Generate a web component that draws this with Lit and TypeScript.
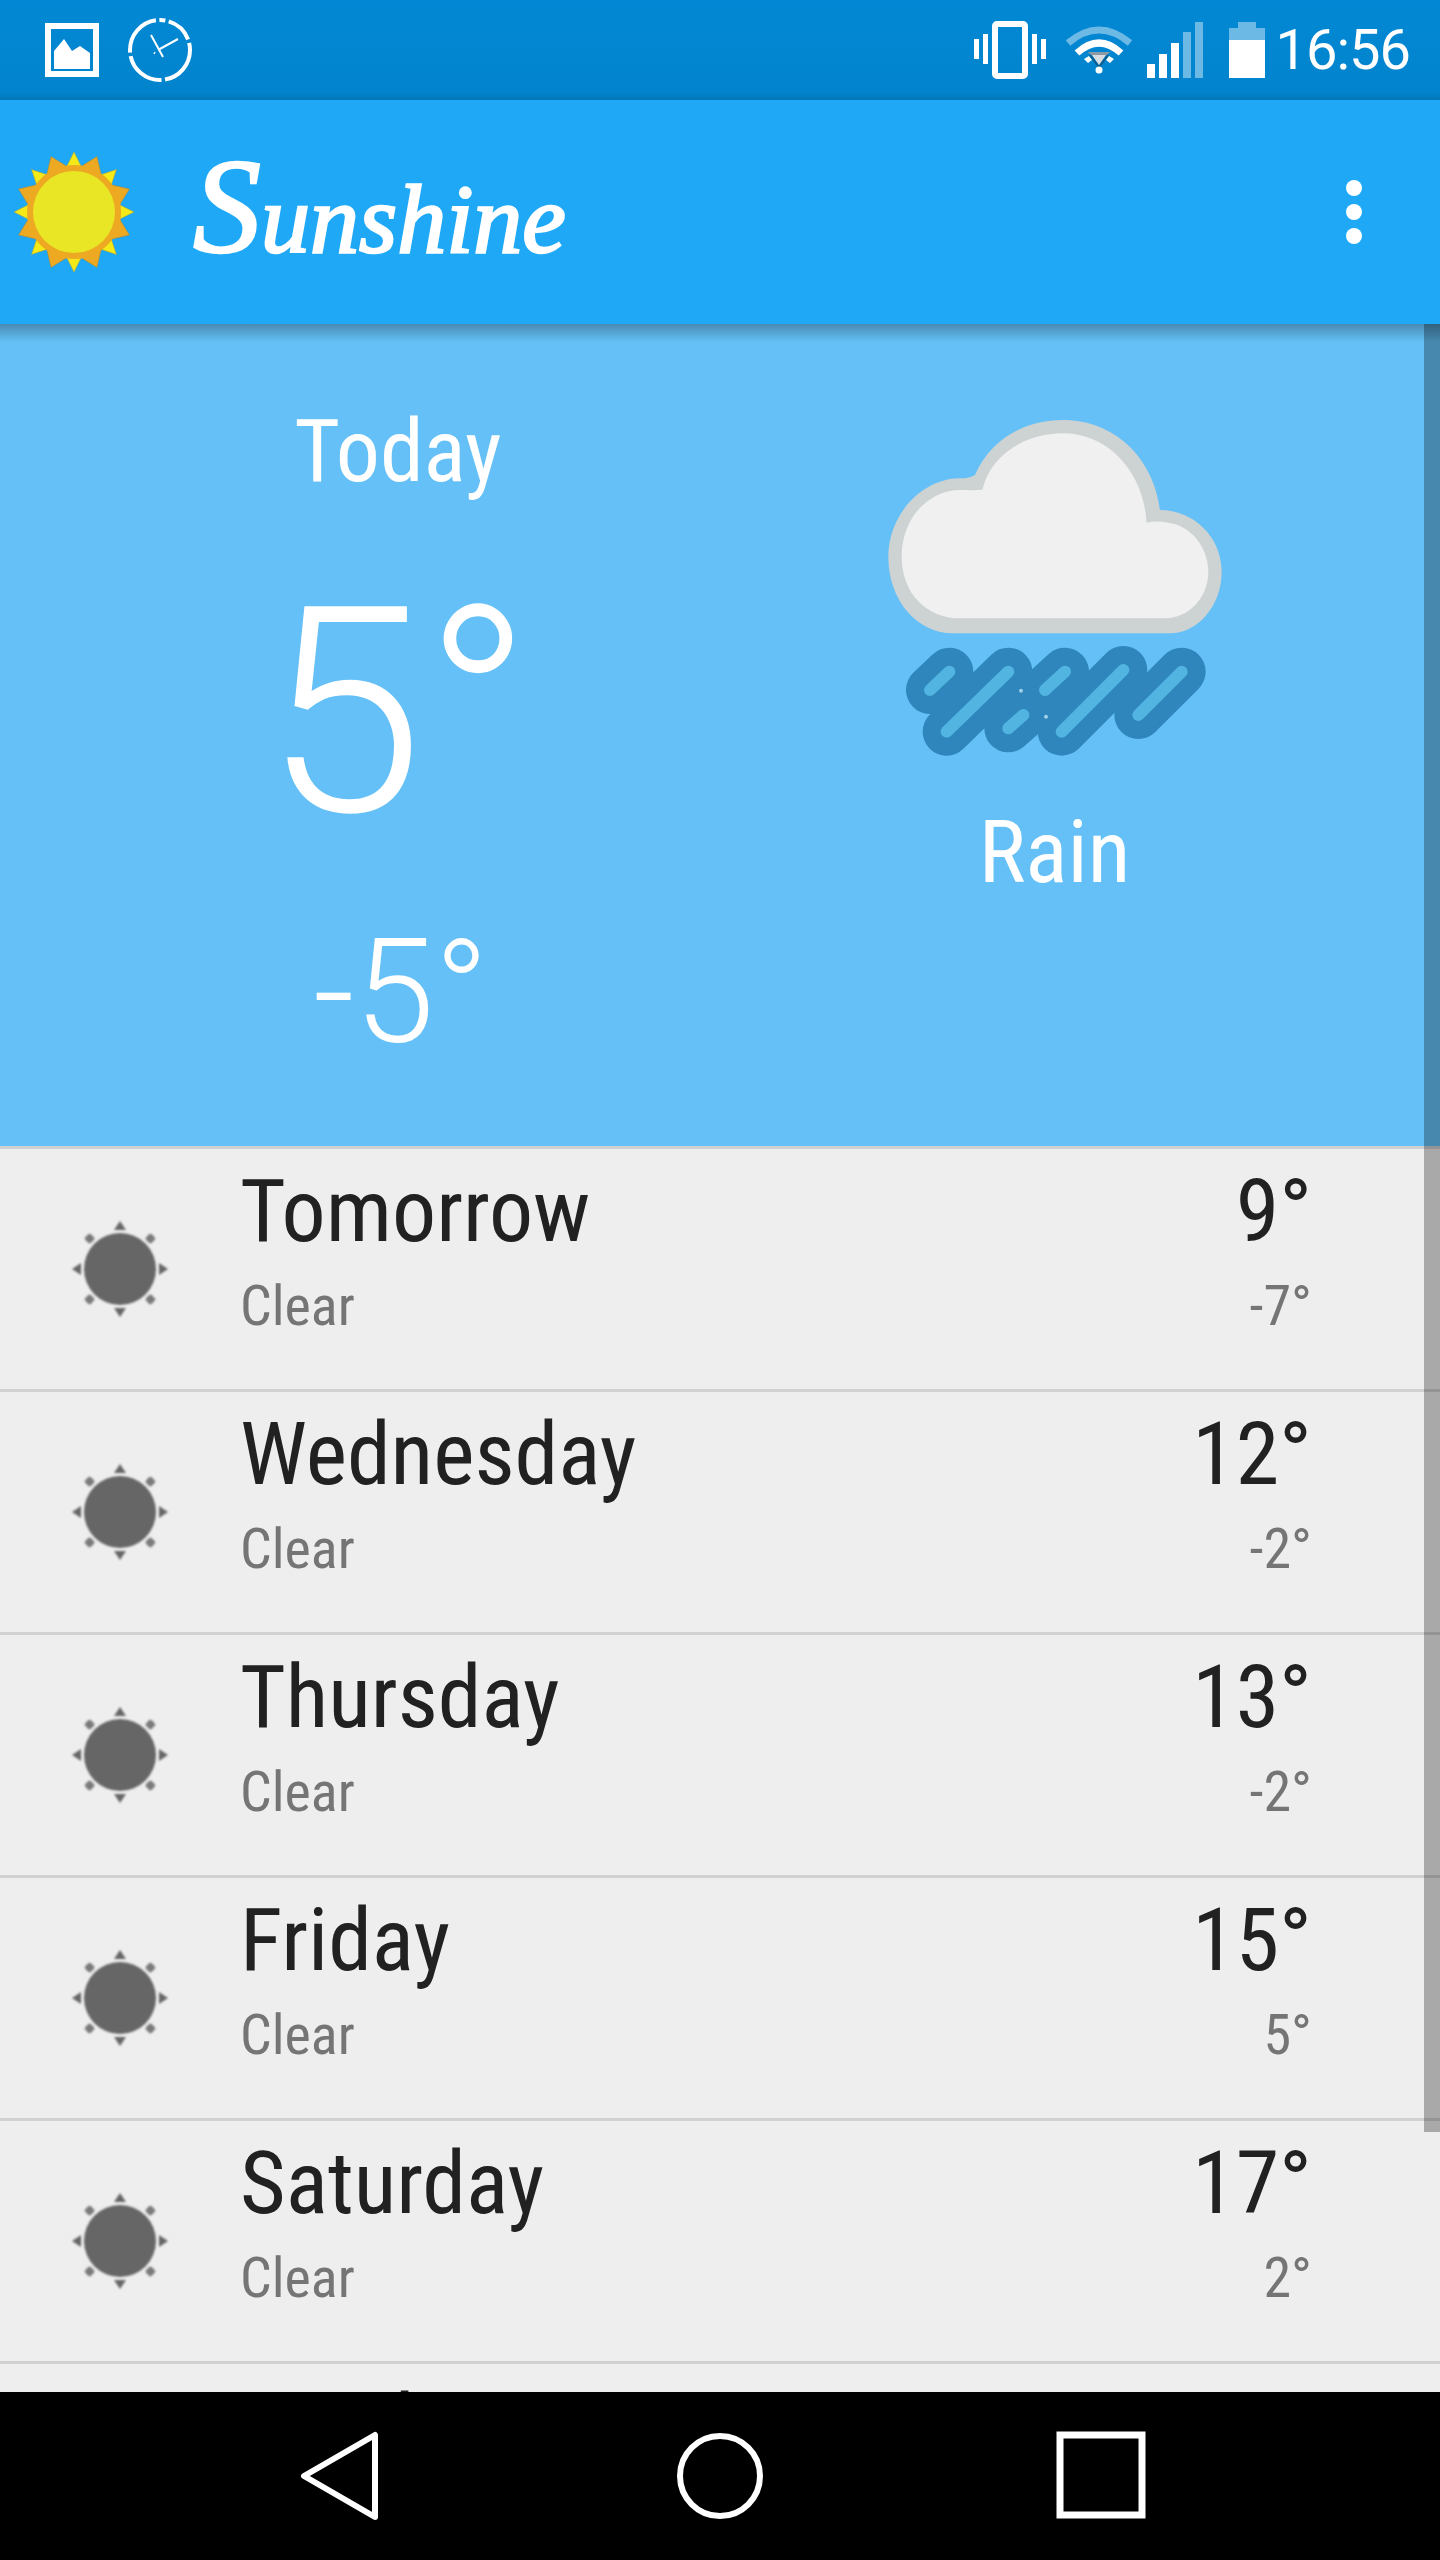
import { LitElement, html, css, svg } from 'lit'
import { customElement } from 'lit/decorators.js'

const days = [
    { day: 'Tomorrow', high: '9°', low: '-7°', sky: 'Clear' },
    { day: 'Wednesday', high: '12°', low: '-2°', sky: 'Clear' },
    { day: 'Thursday', high: '13°', low: '-2°', sky: 'Clear' },
    { day: 'Friday', high: '15°', low: '5°', sky: 'Clear' },
    { day: 'Saturday', high: '17°', low: '2°', sky: 'Clear' },
    // only the top of this row's name shows above the nav bar
    { day: 'Sunday', high: '', low: '', sky: '' },
]

// angles of evenly spaced sun rays, in degrees, from the top
const rays = (n: number) => Array.from({ length: n }, (_, i) => (i / n) * 360)

const logoSun = () => html`
    <svg class="logo" viewBox="-60 -60 120 120" width="120" height="120">
        ${rays(16).map((deg, i) => i % 2
            ? svg`<polygon points="-13,-42 0,-60 13,-42" fill="#eda922" stroke="#a98a3a" stroke-width=".5" transform="rotate(${deg})"/>`
            : svg`<polygon points="-9,-42 0,-60 9,-42" fill="#f5ea18" stroke="#b9a02a" stroke-width=".5" transform="rotate(${deg})"/>`
        )}
        <circle r="47" fill="#eda922"/>
        <circle r="41" fill="#e8e625"/>
    </svg>
`

const clearIcon = () => html`
    <svg class="clear" viewBox="-50 -50 100 100" width="100" height="100">
        <circle r="36" fill="#666"/>
        ${rays(8).map(deg => deg % 90
            ? svg`<rect x="-4" y="-47" width="8" height="8" rx="2" fill="#666" opacity=".85" transform="rotate(${deg})"/>`
            : svg`<polygon points="-6,-39 0,-48 6,-39" fill="#666" transform="rotate(${deg})"/>`
        )}
    </svg>
`

const rainLines = 'M210 870L268 815M260 995L445 815M555 870L615 815M445 985L490 945M605 995L790 810M835 945L965 815'

const cloudRain = () => html`
    <svg class="cloud" viewBox="0 0 1140 1140" width="380" height="380">
        <path fill="#cdd2d3" d="M280 700C170 700 85 600 85 470C85 340 190 235 300 235C320 235 335 232 345 225C390 120 490 60 610 60C760 60 880 170 900 330C1000 330 1085 410 1085 515C1085 620 1010 700 930 700Z"/>
        <path fill="#f0f0f0" d="M300 655C200 655 125 580 125 470C125 350 210 270 300 270C330 270 350 272 368 268C390 170 490 100 610 100C740 100 850 210 860 368C890 362 900 365 925 368C990 375 1045 440 1045 515C1045 590 990 655 910 655Z"/>
        <g fill="none" stroke-linecap="round">
            <path stroke="#2e86bc" stroke-width="144" d=${rainLines}/>
            <path stroke="#52b4e0" stroke-width="36" d=${rainLines}/>
        </g>
        <circle cx="483" cy="872" r="6" fill="#9fd0ea"/>
        <circle cx="558" cy="950" r="6" fill="#9fd0ea"/>
    </svg>
`

@customElement('app-root')
export class AppRoot extends LitElement {
    static styles = css`
        :host {
            display: block;
            width: 1440px;
            height: 2560px;
            font-family: Roboto, sans-serif;
        }

        .screen {
            display: flex;
            flex-direction: column;
            height: 2560px;
            overflow: hidden;
            background: #eeeeee;
        }

        .status {
            height: 100px;
            flex: none;
            display: flex;
            align-items: center;
            justify-content: space-between;
            padding: 0 30px 0 45px;
            box-sizing: border-box;
            background: linear-gradient(#0288d4, #0284cd 92%, #0277b8);
            color: #fff;
        }

        .status-left,
        .status-right {
            display: flex;
            align-items: center;
        }

        .time {
            font-size: 56px;
            letter-spacing: -1px;
            margin-left: 11px;
        }

        .appbar {
            height: 224px;
            flex: none;
            display: flex;
            align-items: center;
            background: #1ea8f6;
            padding: 0 78px 0 14px;
            box-sizing: border-box;
        }

        .logo {
            filter: blur(0.5px);
        }

        .brand {
            font-family: "Liberation Serif", cursive;
            font-style: italic;
            font-size: 98px;
            line-height: 120px;
            color: #fff;
            -webkit-text-stroke: 2.5px #fff;
            filter: blur(0.6px);
            margin-left: 59px;
            flex: 1;
        }

        .brand::first-letter {
            font-size: 136px;
        }

        .dots {
            display: flex;
            flex-direction: column;
            gap: 8px;
        }

        .dots span {
            width: 16px;
            height: 16px;
            border-radius: 50%;
            background: #fff;
        }

        .content {
            flex: 1;
            position: relative;
            overflow: hidden;
        }

        .shade {
            position: absolute;
            inset: 0 0 auto 0;
            height: 18px;
            background: linear-gradient(rgba(0, 0, 0, 0.28), rgba(0, 0, 0, 0));
        }

        .scrollbar {
            position: absolute;
            top: 0;
            right: 0;
            width: 16px;
            height: 1808px;
            background: rgba(0, 0, 0, 0.29);
        }

        .hero {
            height: 822px;
            display: grid;
            grid-template-columns: 796px 520px;
            background: #64c0f6;
            color: #fff;
        }

        .hero-left,
        .hero-right {
            display: flex;
            flex-direction: column;
            align-items: center;
        }

        .cond {
            font-stretch: 75%;
        }

        .today {
            font-size: 88px;
            line-height: 104px;
            margin-top: 75px;
        }

        .hero-high {
            font-size: 288px;
            font-weight: 300;
            line-height: 338px;
            margin-top: 41px;
        }

        .hero-low {
            font-size: 144px;
            font-weight: 300;
            line-height: 169px;
            margin: 26px 0 0 6px;
        }

        .cloud {
            margin: 76px 12px 0 0;
            filter: blur(0.6px);
        }

        .rain {
            font-size: 88px;
            line-height: 104px;
            margin: 20px 3px 0 0;
        }

        .row {
            height: 243px;
            flex: none;
            box-sizing: border-box;
            border-top: 3px solid #d1d1d1;
            display: grid;
            grid-template-columns: 240px 1fr auto;
            padding-right: 128px;
        }

        .row-icon {
            display: flex;
            align-items: center;
            justify-content: center;
        }

        .clear {
            filter: blur(1px);
        }

        .col {
            display: flex;
            flex-direction: column;
            padding-top: 10px;
        }

        .col.end {
            align-items: flex-end;
        }

        .big {
            font-size: 88px;
            line-height: 104px;
            color: #212121;
        }

        .small {
            font-size: 56px;
            line-height: 66px;
            margin-top: 10px;
            color: #757575;
        }

        .nav {
            height: 168px;
            flex: none;
            background: #000;
            display: flex;
            align-items: center;
            padding-left: 296px;
            position: relative;
        }

        .nav svg {
            display: block;
        }

        .nav .home {
            margin-left: 293px;
        }

        .nav .recents {
            margin-left: 291px;
        }

        .clock {
            margin-left: 29px;
        }

        .wifi {
            margin-left: 19px;
        }

        .signal {
            margin-left: 14px;
        }

        .battery {
            margin-left: 26px;
        }
    `

    render() {
        return html`
        <div class="screen">
            <div class="status">
                <div class="status-left">
                    <svg viewBox="0 0 54 54" width="54" height="54">
                        <rect x="3" y="3" width="48" height="48" fill="none" stroke="#fff" stroke-width="6"/>
                        <path fill="#fff" d="M9 46V28L19 16L27 28L35 23L45 30V46Z"/>
                    </svg>
                    <svg class="clock" viewBox="0 0 64 66" width="64" height="66">
                        <circle cx="32" cy="33" r="30" fill="none" stroke="#fff" stroke-width="4" stroke-dasharray="42 3.500 42.500 3.500 45.500 3.500 6 3.500 27.500 3.500 10 0"/>
                        <path fill="none" stroke="#fff" stroke-width="2" d="M23 18L35 40M30 33L50 22M26 35.500L27 36.500"/>
                    </svg>
                </div>
                <div class="status-right">
                    <svg viewBox="0 0 72 58" width="72" height="58">
                        <rect x="21" y="3" width="30" height="52" rx="2" fill="none" stroke="#fff" stroke-width="6"/>
                        <path fill="#fff" d="M0 18h5v20H0zM9 13h5v30H9zM58 13h5v30h-5zM67 18h5v20h-5z"/>
                    </svg>
                    <svg class="wifi" viewBox="0 0 68 50" width="68" height="50">
                        <path fill="none" stroke="#6cb9e5" stroke-width="7" d="M3 18Q34 -8 65 18"/>
                        <path fill="none" stroke="#fff" stroke-width="7" d="M12 28Q34 8 56 28"/>
                        <path fill="#fff" d="M19 34l5 -3l3 4l-4 3zM49 34l-5 -3l-3 4l4 3z"/>
                        <path fill="#8c9aa5" d="M23 27h22l-3 3H26z"/>
                        <path fill="none" stroke="#0d5c8c" stroke-width="2" d="M25 30L34 42L43 30"/>
                        <path fill="#d8dde0" d="M27 30H41L34 40Z"/>
                        <circle cx="34" cy="45" r="3.500" fill="#fff"/>
                    </svg>
                    <svg class="signal" viewBox="0 0 56 56" width="56" height="56">
                        <path fill="#fff" d="M0 42h8v14H0zM12 32h8v24h-8zM24 21h8v35h-8z"/>
                        <path fill="#6cb9e5" d="M36 10h8v46h-8zM48 0h8v56h-8z"/>
                    </svg>
                    <svg class="battery" viewBox="0 0 36 56" width="36" height="56">
                        <path fill="#6cb9e5" d="M9 0h18v6h9v12H0V6h9z"/>
                        <path fill="#fff" d="M0 18h36v38H0z"/>
                    </svg>
                    <span class="time">16:56</span>
                </div>
            </div>
            <div class="appbar">
                ${logoSun()}
                <span class="brand">Sunshine</span>
                <div class="dots"><span></span><span></span><span></span></div>
            </div>
            <div class="content">
                <div class="hero">
                    <div class="hero-left">
                        <span class="today cond">Today</span>
                        <span class="hero-high">5°</span>
                        <span class="hero-low">-5°</span>
                    </div>
                    <div class="hero-right">
                        ${cloudRain()}
                        <span class="rain cond">Rain</span>
                    </div>
                </div>
                ${days.map(d => html`
                    <div class="row">
                        <div class="row-icon">${d.sky ? clearIcon() : ''}</div>
                        <div class="col">
                            <span class="big cond">${d.day}</span>
                            ${d.sky ? html`<span class="small cond">${d.sky}</span>` : ''}
                        </div>
                        <div class="col end">
                            <span class="big cond">${d.high}</span>
                            <span class="small cond">${d.low}</span>
                        </div>
                    </div>
                `)}
                <div class="shade"></div>
                <div class="scrollbar"></div>
            </div>
            <div class="nav">
                <svg viewBox="0 0 86 90" width="86" height="90">
                    <path fill="none" stroke="#fff" stroke-width="6" stroke-linejoin="round" d="M79 4V86L8 45Z"/>
                </svg>
                <svg class="home" viewBox="0 0 90 90" width="90" height="90">
                    <circle cx="45" cy="45" r="40" fill="none" stroke="#fff" stroke-width="6"/>
                </svg>
                <svg class="recents" viewBox="0 0 90 90" width="90" height="90">
                    <rect x="4" y="4" width="82" height="80" fill="none" stroke="#fff" stroke-width="7"/>
                </svg>
            </div>
        </div>
    `
    }
}
